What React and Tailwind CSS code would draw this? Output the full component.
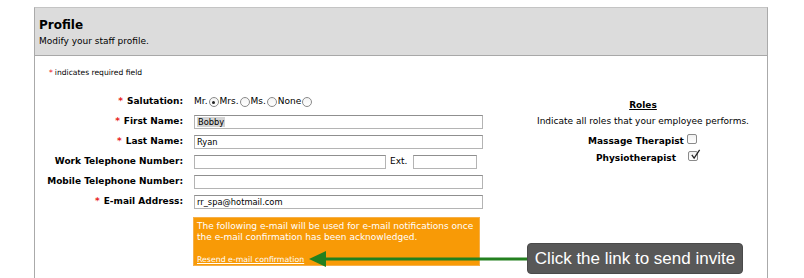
import React from 'react'

const font = "font-['DejaVu_Sans',Verdana,sans-serif]"

function Radio({ checked }) {
  return (
    <span className="inline-flex items-center justify-center w-[10px] h-[10px] rounded-full border border-[#8a8a8a] bg-gradient-to-b from-[#f4f4f4] to-white mx-[1px]">
      {checked && <span className="w-[3px] h-[3px] rounded-full bg-[#222]" />}
    </span>
  )
}

function Checkbox({ checked }) {
  return (
    <span className="relative inline-block w-[10px] h-[10px] rounded-[2px] border border-[#8a8a8a] bg-gradient-to-b from-[#f0f0f0] to-white">
      {checked && (
        <svg viewBox="0 0 12 12" className="absolute left-[1px] -top-[3px] w-[11px] h-[11px]">
          <path d="M2 6.5 L4.5 10 L10.5 1" fill="none" stroke="#222" strokeWidth="1.4" />
        </svg>
      )}
    </span>
  )
}

function Field({ value = '', width = 'w-[289px]' }) {
  return (
    <div className={`${width} h-[14px] border border-[#b4b4b4] border-t-[#8f8f8f] bg-white pl-[2px] text-[8.3px] leading-[12px] text-black`}>
      {value}
    </div>
  )
}

function Row({ label, required, children }) {
  return (
    <div className="flex items-center h-[20px]">
      <div className="w-[148px] text-right font-bold text-[9px] whitespace-nowrap">
        {required && <span className="text-[#e8241c] mr-[4px]">*</span>}
        {label}
      </div>
      <div className="ml-[11px] flex items-center">{children}</div>
    </div>
  )
}

export default function App() {
  return (
    <div className={`relative w-[804px] h-[278px] overflow-hidden bg-white ${font}`}>
      <div className="ml-[34px] mt-[7px] w-[734px] h-[300px] border border-[#aaaaaa] border-t-[#c4c4c4]">
        <div className="h-[48px] bg-[#dcdcdc] border-b border-[#a8a8a8] pl-[4px] pt-[9px]">
          <h1 className="text-[12px] leading-[16px] font-bold text-black">Profile</h1>
          <p className="text-[9px] leading-[14px] mt-[1px] text-black">Modify your staff profile.</p>
        </div>

        <div className="pt-[12px]">
          <p className="pl-[14px] text-[7.6px] leading-[10px] text-black">
            <span className="text-[#e8241c] mr-[2px]">*</span>indicates required field
          </p>

          <div className="flex mt-[14px]">
            <div className="w-[484px]">
              <Row label="Salutation:" required>
                <div className="flex items-center text-[9px]">
                  <span>Mr.</span><Radio checked />
                  <span>Mrs.</span><Radio />
                  <span>Ms.</span><Radio />
                  <span>None</span><Radio />
                </div>
              </Row>
              <Row label="First Name:" required>
                <Field value={<span className="bg-[#d4d4d4] px-[1px]">Bobby</span>} />
              </Row>
              <Row label="Last Name:" required>
                <Field value="Ryan" />
              </Row>
              <Row label="Work Telephone Number:">
                <Field width="w-[192px]" />
                <span className="text-[9px] ml-[4px] mr-[6px]">Ext.</span>
                <Field width="w-[64px]" />
              </Row>
              <Row label="Mobile Telephone Number:">
                <Field />
              </Row>
              <Row label="E-mail Address:" required>
                <Field value="rr_spa@hotmail.com" />
              </Row>

              <div className="ml-[158px] mt-[5px] w-[287px] h-[49px] bg-[#f89a06] border border-[#f6b04a] px-[3px] pt-[3px] text-white text-[9px] leading-[11px]">
                <p>The following e-mail will be used for e-mail notifications once the e-mail confirmation has been acknowledged.</p>
                <a className="block mt-[12px] underline text-[7.8px] leading-[10px]">Resend e-mail confirmation</a>
              </div>
            </div>

            <div className="flex-1 flex flex-col items-center mt-[7px] text-[9px] text-black">
              <h2 className="font-bold underline leading-[12px]">Roles</h2>
              <p className="mt-[4px] leading-[12px]">Indicate all roles that your employee performs.</p>
              <div className="mt-[6px] flex flex-col">
                <div className="flex items-center h-[17px]">
                  <span className="w-[96px] text-center font-bold whitespace-nowrap">Massage Therapist</span>
                  <span className="ml-[3px]"><Checkbox /></span>
                </div>
                <div className="flex items-center h-[17px]">
                  <span className="w-[96px] text-center font-bold whitespace-nowrap">Physiotherapist</span>
                  <span className="ml-[4px]"><Checkbox checked /></span>
                </div>
              </div>
            </div>
          </div>
        </div>
      </div>

      <svg className="absolute left-[305px] top-[249px]" width="225" height="20" viewBox="0 0 225 20">
        <line x1="18" y1="10" x2="225" y2="10" stroke="#23801f" strokeWidth="3" />
        <polygon points="4,10 21,2 21,18" fill="#23801f" />
      </svg>

      <div className="absolute left-[527px] top-[243px] w-[216px] h-[31px] rounded-[4px] bg-[#585858] border border-[#4a4a4a] flex items-center justify-center font-['Liberation_Sans',Arial,sans-serif] text-[17px] text-white">
        Click the link to send invite
      </div>
    </div>
  )
}
